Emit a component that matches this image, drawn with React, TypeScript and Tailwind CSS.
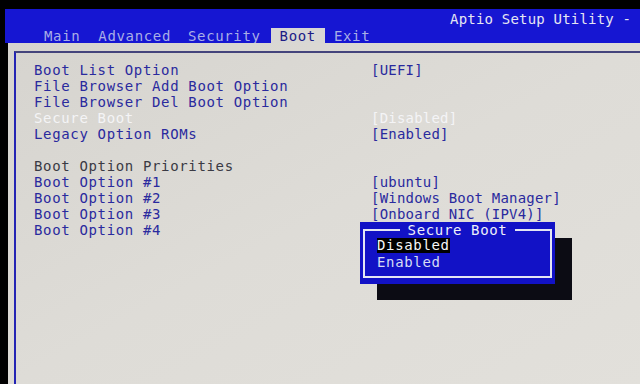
const tabs = [
  { label: 'Main', ml: 'ml-0' },
  { label: 'Advanced', ml: 'ml-[18px]' },
  { label: 'Security', ml: 'ml-[17px]' },
];

const rows: { label: string; value?: string; kind?: 'sel' | 'head' | 'gap' }[] = [
  { label: 'Boot List Option', value: '[UEFI]' },
  { label: 'File Browser Add Boot Option' },
  { label: 'File Browser Del Boot Option' },
  { label: 'Secure Boot', value: '[Disabled]', kind: 'sel' },
  { label: 'Legacy Option ROMs', value: '[Enabled]' },
  { label: '', kind: 'gap' },
  { label: 'Boot Option Priorities', kind: 'head' },
  { label: 'Boot Option #1', value: '[ubuntu]' },
  { label: 'Boot Option #2', value: '[Windows Boot Manager]' },
  { label: 'Boot Option #3', value: '[Onboard NIC (IPV4)]' },
  { label: 'Boot Option #4' },
];

const App = () => {
  return (
    <div
      className="relative flex h-[384px] w-[640px] flex-col overflow-hidden bg-black text-[14px] leading-[16px] tracking-[0.65px]"
      style={{ fontFamily: '"DejaVu Sans Mono", "Liberation Mono", monospace' }}
    >
      {/* header */}
      <div className="mt-[9px] ml-[5px] flex h-[34px] flex-col bg-[#1616d2] whitespace-nowrap">
        <div className="flex h-[19px] items-center pl-[445px] tracking-[0.2px] text-[#e6e6f2]">
          Aptio Setup Utility -
        </div>
        <div className="flex h-[15px] items-center pl-[39px] text-[#a9aee6]">
          {tabs.map((t) => (
            <span key={t.label} className={t.ml}>
              {t.label}
            </span>
          ))}
          <span className="ml-[10px] flex h-[15px] items-center bg-[#d8d7d4] px-[9px] text-[#1c1c86]">
            Boot
          </span>
          <span className="ml-[9px]">Exit</span>
        </div>
      </div>

      {/* body */}
      <div className="ml-[8px] flex flex-1 flex-col bg-gradient-to-br from-[#d6d4cf] via-[#dedcd7] to-[#e2e0db] pt-[8px] pl-[6px]">
        <div className="flex-1 border-t-2 border-l-2 border-t-[#44447c] border-l-[#2424b4] pt-[9px] pl-[18px] whitespace-nowrap">
          {rows.map((r, i) => (
            <div key={i} className="flex h-[16px] items-center">
              <span
                className={`w-[337px] ${
                  r.kind === 'sel'
                    ? 'text-[#f4f4f6]'
                    : r.kind === 'head'
                      ? 'text-[#3a3a44]'
                      : 'text-[#2a2a9e]'
                }`}
              >
                {r.label}
              </span>
              {r.value && (
                <span
                  className={`tracking-[0.2px] ${
                    r.kind === 'sel' ? 'text-[#f4f4f6]' : 'text-[#2a2a9e]'
                  }`}
                >
                  {r.value}
                </span>
              )}
            </div>
          ))}
        </div>
      </div>

      {/* popup */}
      <div className="absolute top-[238px] left-[377px] h-[62px] w-[195px] bg-[#0c0c14]" />
      <div className="absolute top-[222px] left-[360px] h-[62px] w-[195px] bg-[#1212c6]">
        <div className="absolute top-[7px] right-[3px] bottom-[6px] left-[3px] border-2 border-[#e4e6f4]" />
        <div className="absolute top-0 left-0 flex w-full justify-center">
          <span className="bg-[#1212c6] px-[8px] leading-[16px] text-[#eef0fa]">Secure Boot</span>
        </div>
        <div className="absolute top-[16px] left-[17px] flex flex-col">
          <span className="h-[15px] w-fit bg-black leading-[15px] text-[#f6f6f8]">Disabled</span>
          <span className="mt-[1px] leading-[16px] text-[#d6dcf4]">Enabled</span>
        </div>
      </div>
    </div>
  );
};

export default App;
